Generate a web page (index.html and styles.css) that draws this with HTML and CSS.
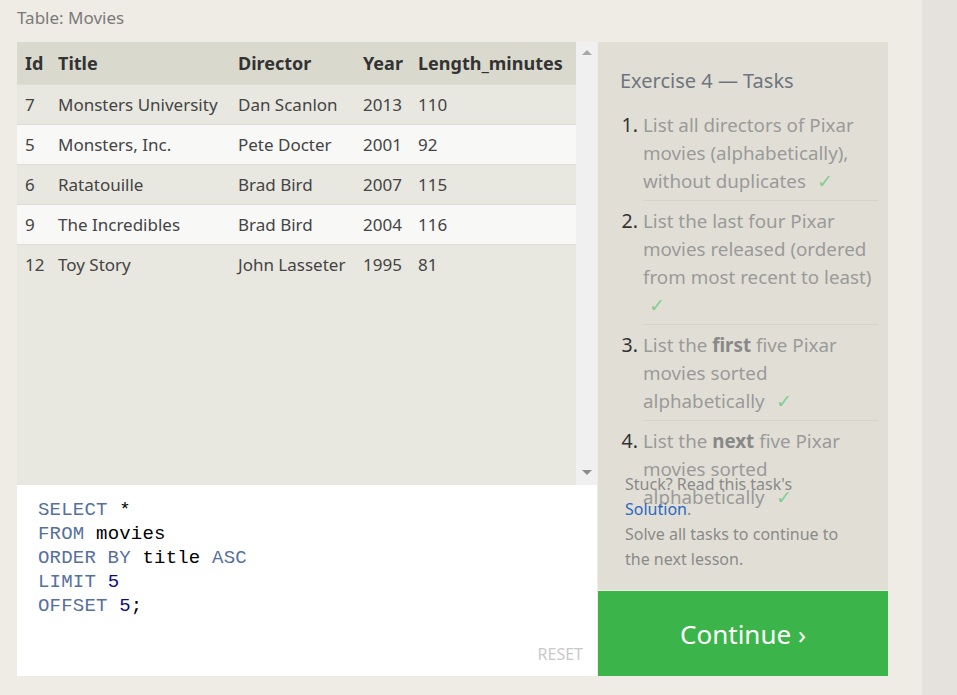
FILE: index.html
```html
<!DOCTYPE html>
<html>
<head>
<meta charset="utf-8">
<title>SQL Lesson</title>
<link rel="stylesheet" href="styles.css">
</head>
<body>
<div class="page">
  <div class="main">
    <div class="caption">Table: Movies</div>
    <div class="workspace">
      <div class="left">
        <div class="results">
          <div class="table-wrap">
            <table class="movies">
              <thead>
                <tr><th class="c-id">Id</th><th class="c-title">Title</th><th class="c-dir">Director</th><th class="c-year">Year</th><th class="c-len">Length_minutes</th></tr>
              </thead>
              <tbody>
                <tr><td>7</td><td>Monsters University</td><td>Dan Scanlon</td><td>2013</td><td>110</td></tr>
                <tr><td>5</td><td>Monsters, Inc.</td><td>Pete Docter</td><td>2001</td><td>92</td></tr>
                <tr><td>6</td><td>Ratatouille</td><td>Brad Bird</td><td>2007</td><td>115</td></tr>
                <tr><td>9</td><td>The Incredibles</td><td>Brad Bird</td><td>2004</td><td>116</td></tr>
                <tr><td>12</td><td>Toy Story</td><td>John Lasseter</td><td>1995</td><td>81</td></tr>
              </tbody>
            </table>
          </div>
          <div class="scrollbar">
            <span class="arrow up"></span>
            <span class="arrow down"></span>
          </div>
        </div>
        <div class="editor">
          <pre class="code"><span class="kw">SELECT</span> *
<span class="kw">FROM</span> movies
<span class="kw">ORDER BY</span> title <span class="kw">ASC</span>
<span class="kw">LIMIT</span> <span class="num">5</span>
<span class="kw">OFFSET</span> <span class="num">5</span>;</pre>
          <div class="reset">RESET</div>
        </div>
      </div>
      <div class="right">
        <div class="panel">
          <div class="tasks">
            <h2 class="heading">Exercise 4 — Tasks</h2>
            <ol class="task-list">
              <li>List all directors of Pixar movies (alphabetically), without duplicates <span class="check">✓</span></li>
              <li>List the last four Pixar movies released (ordered from most recent to least) <span class="check">✓</span></li>
              <li>List the <b>first</b> five Pixar movies sorted alphabetically <span class="check">✓</span></li>
              <li>List the <b>next</b> five Pixar movies sorted alphabetically <span class="check">✓</span></li>
            </ol>
          </div>
          <div class="hint">
            Stuck? Read this task's <a class="link">Solution</a>.<br>
            Solve all tasks to continue to the next lesson.
          </div>
        </div>
        <div class="continue">Continue ›</div>
      </div>
    </div>
  </div>
  <div class="strip"></div>
</div>
</body>
</html>
```

FILE: styles.css
```css
* { box-sizing: border-box; }
html, body { margin: 0; padding: 0; }
body {
  background: #efece5;
  font-family: "Noto Sans", "Open Sans", sans-serif;
  color: #333;
}
.page {
  display: grid;
  grid-template-columns: 922px 1fr;
  height: 695px;
}
.strip { background: #e5e1dd; }
.main { padding: 6px 0 0 17px; }
.caption {
  height: 36px;
  font-size: 17px;
  color: #7a7a7a;
  line-height: 24px;
}
.workspace {
  display: grid;
  grid-template-columns: 580px 290px;
  column-gap: 1px;
}
.left { display: flex; flex-direction: column; }
.results {
  display: flex;
  height: 443px;
  background: #e8e7e0;
}
.table-wrap { width: 559px; }
.movies {
  border-collapse: collapse;
  table-layout: fixed;
  width: 559px;
  font-size: 17px;
}
.movies th, .movies td {
  text-align: left;
  padding: 0 0 0 8px;
  white-space: nowrap;
}
.movies th {
  height: 42px;
  background: #dad9ce;
  font-weight: bold;
  font-size: 18px;
  color: #333;
}
.movies td {
  height: 40px;
  color: #444;
  border-top: 1px solid #dedcd5;
}
.movies tbody tr:nth-child(even) td { background: #f8f8f7; }
.c-id { width: 33px; }
.c-title { width: 180px; }
.c-dir { width: 125px; }
.c-year { width: 55px; }
.c-len { width: 166px; }
.scrollbar {
  width: 21px;
  background: #f0f0f0;
  display: flex;
  flex-direction: column;
  justify-content: space-between;
  align-items: center;
  padding: 8px 0 10px;
}
.arrow {
  width: 0; height: 0;
  border-left: 5px solid transparent;
  border-right: 5px solid transparent;
}
.arrow.up { border-bottom: 5px solid #a8a8a8; }
.arrow.down { border-top: 5px solid #8c8c8c; }
.editor {
  height: 191px;
  background: #fff;
  display: flex;
  flex-direction: column;
  justify-content: space-between;
  padding: 13px 14px 12px 21px;
}
.code {
  margin: 0;
  font-family: "Liberation Mono", "DejaVu Sans Mono", monospace;
  font-size: 19px;
  line-height: 24px;
  color: #000;
  letter-spacing: 0.2px;
}
.kw { color: #56709e; }
.num { color: #0b0b8a; }
.reset {
  align-self: flex-end;
  font-size: 16px;
  color: #c9c9c9;
  line-height: 20px;
}
.right { display: flex; flex-direction: column; row-gap: 1px; }
.panel {
  height: 548px;
  background: #e1dfd5;
  display: flex;
  flex-direction: column;
  padding: 25px 10px 18px 22px;
}
.tasks { flex: 1; min-height: 0; }
.heading {
  margin: 0 0 16px;
  font-weight: normal;
  font-size: 20px;
  line-height: 28px;
  color: #6e7480;
}
.task-list {
  margin: 0;
  padding: 0 0 0 23px;
  font-size: 18.8px;
  line-height: 28px;
  color: #9a9a9a;
}
.task-list li { padding: 0 0 5px; }
.task-list li + li { border-top: 1px solid #d6d4ca; padding-top: 6px; }
.task-list li::marker { color: #333; font-size: 19.5px; }
.task-list b { color: #888; }
.check { color: #86cc8e; margin-left: 6px; }
.hint {
  width: 232px;
  padding-left: 5px;
  font-size: 16px;
  line-height: 25px;
  color: #8a8a8a;
}
.link { color: #2d67c2; }
.continue {
  height: 85px;
  background: #3bb54a;
  color: #fff;
  font-size: 26px;
  display: flex;
  align-items: center;
  justify-content: center;
}
```
